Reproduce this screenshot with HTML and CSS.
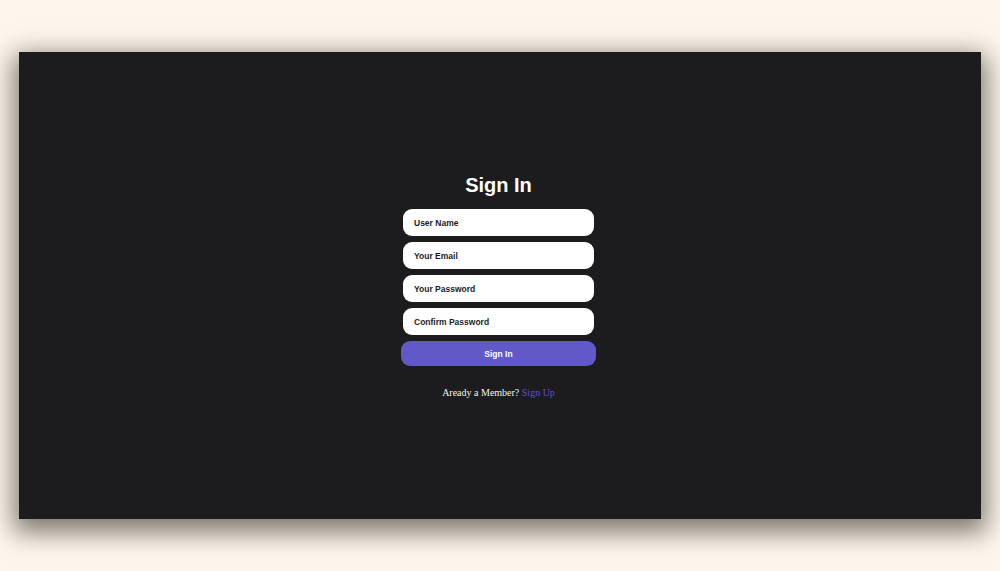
FILE: index.html
```html
<!DOCTYPE html>
<html lang="en">
<head>
<meta charset="utf-8">
<title>Sign In</title>
<link rel="stylesheet" href="styles.css">
</head>
<body>
<main class="panel">
  <form class="form" onsubmit="return false">
    <h1 class="title">Sign In</h1>
    <input class="field" type="text" placeholder="User Name">
    <input class="field" type="email" placeholder="Your Email">
    <input class="field" type="password" placeholder="Your Password">
    <input class="field" type="password" placeholder="Confirm Password">
    <button class="submit" type="submit">Sign In</button>
    <p class="footer">Aready a Member? <a class="link" href="#">Sign Up</a></p>
  </form>
</main>
</body>
</html>
```
FILE: styles.css
```css
html, body {
  margin: 0;
  height: 100%;
}
body {
  background: #fdf6ec;
  padding: 52px 19px 0;
  box-sizing: border-box;
}
.panel {
  width: 962px;
  height: 467px;
  background: #1c1c1e;
  box-shadow: 0 8px 24px 5px rgba(40, 34, 24, 0.6);
  display: flex;
  align-items: center;
  justify-content: center;
}
.form {
  display: flex;
  flex-direction: column;
  align-items: center;
  gap: 6px;
  margin: 0;
  padding: 1px 3px 0 0;
}
.title {
  margin: 0 0 6px;
  font-family: "Liberation Sans", Arial, sans-serif;
  font-weight: 700;
  font-size: 20px;
  line-height: 24px;
  color: #ffffff;
}
.field {
  width: 191px;
  height: 27px;
  box-sizing: border-box;
  border: none;
  outline: none;
  border-radius: 9px;
  background: #ffffff;
  padding: 0 11px;
  font-family: "Liberation Sans", Arial, sans-serif;
  font-weight: 700;
  font-size: 8.5px;
  color: #1c1c1e;
}
.field::placeholder {
  color: #1c1c1e;
  opacity: 1;
}
.submit {
  width: 195px;
  height: 25px;
  border: none;
  border-radius: 9px;
  background: #6259c9;
  color: #ffffff;
  font-family: "Liberation Sans", Arial, sans-serif;
  font-weight: 700;
  font-size: 8.5px;
  cursor: pointer;
}
.footer {
  margin: 15px 0 0;
  font-family: "Liberation Serif", "Times New Roman", serif;
  font-size: 10px;
  line-height: 12px;
  color: #f2f2f2;
}
.link {
  color: #5d53c9;
  text-decoration: none;
}
```
